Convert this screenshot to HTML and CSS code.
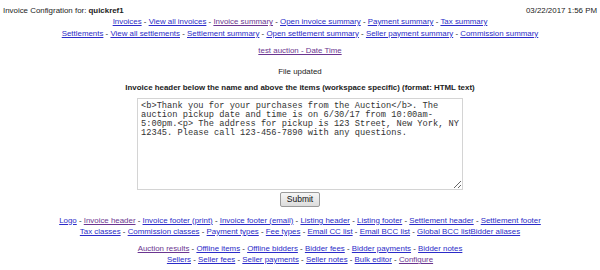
FILE: index.html
```html
<!doctype html>
<html>
  <head>
    <meta name="viewport" content="width=device-width, initial-scale=1">
    <link rel="stylesheet" href="styles.css">
    <title>Invoice Configration</title>
  </head>
  <body>
    <div class="top">
      <span>Invoice Configration for: <b>quickref1</b></span>
      <span>03/22/2017 1:56 PM</span>
    </div>

    <div class="nav">
      <a href="#">Invoices</a> - <a href="#">View all invoices</a> - <a class="seen" href="#">Invoice summary</a> - <a href="#">Open invoice summary</a> - <a href="#">Payment summary</a> - <a href="#">Tax summary</a><br>
      <a href="#">Settlements</a> - <a href="#">View all settlements</a> - <a href="#">Settlement summary</a> - <a href="#">Open settlement summary</a> - <a href="#">Seller payment summary</a> - <a href="#">Commission summary</a>
    </div>

    <div class="nav auction"><a class="seen" href="#">test auction - Date Time</a></div>

    <p class="msg">File updated</p>

    <form class="editor">
      <label class="label" for="hdr">Invoice header below the name and above the items (workspace specific) (format: HTML text)</label>
      <textarea id="hdr" class="box">&lt;b&gt;Thank you for your purchases from the Auction&lt;/b&gt;. The auction pickup date and time is on 6/30/17 from 10:00am-5:00pm.&lt;p&gt; The address for pickup is 123 Street, New York, NY 12345. Please call 123-456-7890 with any questions.</textarea>
      <button type="button" class="submit">Submit</button>
    </form>

    <div class="nav">
      <a href="#">Logo</a> - <a class="seen" href="#">Invoice header</a> - <a href="#">Invoice footer (print)</a> - <a href="#">Invoice footer (email)</a> - <a href="#">Listing header</a> - <a href="#">Listing footer</a> - <a href="#">Settlement header</a> - <a href="#">Settlement footer</a><br>
      <a href="#">Tax classes</a> - <a href="#">Commission classes</a> - <a href="#">Payment types</a> - <a href="#">Fee types</a> - <a href="#">Email CC list</a> - <a href="#">Email BCC list</a> - <a href="#">Global BCC list</a><a href="#">Bidder aliases</a>
    </div>

    <div class="nav lower">
      <a class="seen" href="#">Auction results</a> - <a href="#">Offline items</a> - <a href="#">Offline bidders</a> - <a href="#">Bidder fees</a> - <a href="#">Bidder payments</a> - <a href="#">Bidder notes</a><br>
      <a href="#">Sellers</a> - <a href="#">Seller fees</a> - <a href="#">Seller payments</a> - <a href="#">Seller notes</a> - <a href="#">Bulk editor</a> - <a class="seen" href="#">Configure</a>
    </div>
  </body>
</html>
```

FILE: styles.css
```css
body {
  margin: 0;
  padding: 5px 3px 0 3px;
  font-family: "Liberation Sans", Arial, sans-serif;
  font-size: 7.9px;
  line-height: 11px;
  color: #222;
  background: #fff;
}

a { color: #2b2bc8; }
a.seen { color: #6b3590; }

.top {
  display: flex;
  justify-content: space-between;
}

.nav {
  text-align: center;
  line-height: 11.5px;
}

.auction { margin-top: 6px; }

.msg {
  text-align: center;
  margin: 9px 0 0 0;
}

.editor {
  display: flex;
  flex-direction: column;
  align-items: center;
  margin-top: 5px;
}

.label {
  font-weight: bold;
  margin-bottom: 5px;
}

.box {
  width: 326px;
  height: 92px;
  box-sizing: border-box;
  padding: 3px 3px;
  border: 1px solid #d4d4d4;
  font-family: "Liberation Mono", "Courier New", monospace;
  font-size: 8.7px;
  line-height: 9.1px;
  color: #333;
  resize: vertical;
}

.submit {
  margin: 2px 0 8px 0;
  padding: 1px 6px;
  height: 15px;
  font-family: "Liberation Sans", Arial, sans-serif;
  font-size: 8.5px;
  line-height: 11px;
  color: #111;
  background: linear-gradient(#f6f6f6, #dcdcdc);
  border: 1px solid #9a9a9a;
  border-radius: 2px;
}

.lower { margin-top: 5px; }
```
